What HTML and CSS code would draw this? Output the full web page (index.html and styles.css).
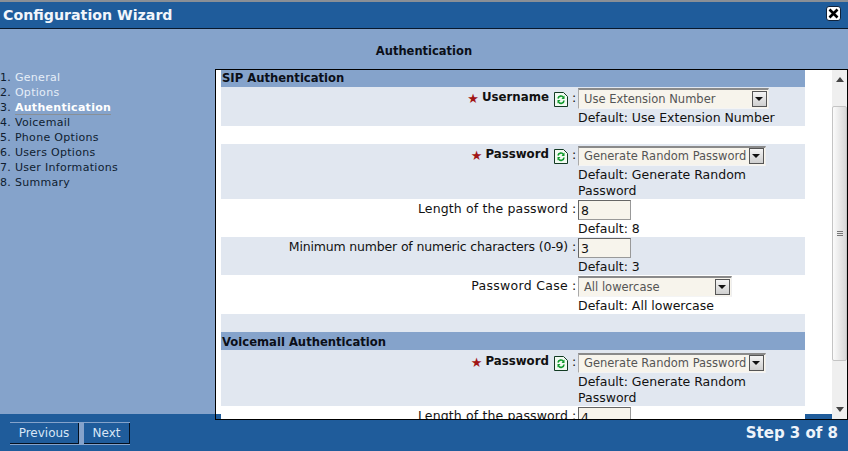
FILE: index.html
```html
<!DOCTYPE html>
<html lang="en">
<head>
<meta charset="utf-8">
<title>Configuration Wizard</title>
<link rel="stylesheet" href="styles.css">
</head>
<body>
<div class="wizard">
  <div class="topline"></div>
  <header class="titlebar">
    <h1>Configuration Wizard</h1>
    <button class="close" aria-label="Close"><svg width="13" height="13" viewBox="0 0 13 13"><path d="M2.500 2.500l8 8M10.500 2.500l-8 8" stroke="#000" stroke-width="2.600" fill="none"/></svg></button>
  </header>
  <main class="middle">
    <h2 class="heading">Authentication</h2>
    <div class="columns">
      <ol class="steps">
        <li class="done"><span>General</span></li>
        <li class="done"><span>Options</span></li>
        <li class="current"><span>Authentication</span></li>
        <li><span>Voicemail</span></li>
        <li><span>Phone Options</span></li>
        <li><span>Users Options</span></li>
        <li><span>User Informations</span></li>
        <li><span>Summary</span></li>
      </ol>
      <div class="panel">
        <div class="form">
          <div class="section first">SIP Authentication</div>

          <div class="row shade">
            <div class="label strong"><span class="star">★</span><b>Username</b><svg class="refresh" viewBox="0 0 14 15"><path d="M.5.5h9l4 4v10H.5z" fill="#f2faf2" stroke="#123a22"/><path d="M4 6.500a3 3 0 0 1 5.500-1M10 8.500a3 3 0 0 1-5.500 1.500" stroke="#0f9a2c" stroke-width="1.600" fill="none"/><path d="M10.500 3.500v3.500h-3zM3.500 11.500V8h3z" fill="#0f9a2c"/></svg><span class="colon">:</span></div>
            <div class="value">
              <div class="select wide"><span>Use Extension Number</span><i class="arrow"></i></div>
              <div class="hint">Default: Use Extension Number</div>
            </div>
          </div>
          <div class="gap"></div>
          <div class="row shade">
            <div class="label strong"><span class="star">★</span><b>Password</b><svg class="refresh" viewBox="0 0 14 15"><path d="M.5.5h9l4 4v10H.5z" fill="#f2faf2" stroke="#123a22"/><path d="M4 6.500a3 3 0 0 1 5.500-1M10 8.500a3 3 0 0 1-5.500 1.500" stroke="#0f9a2c" stroke-width="1.600" fill="none"/><path d="M10.500 3.500v3.500h-3zM3.500 11.500V8h3z" fill="#0f9a2c"/></svg><span class="colon">:</span></div>
            <div class="value">
              <div class="select"><span>Generate Random Password</span><i class="arrow"></i></div>
              <div class="hint">Default: Generate Random Password</div>
            </div>
          </div>
          <div class="row">
            <div class="label">Length of the password<span class="colon">:</span></div>
            <div class="value"><div class="input">8</div><div class="hint">Default: 8</div></div>
          </div>
          <div class="row shade">
            <div class="label tight">Minimum number of numeric characters (0-9)<span class="colon">:</span></div>
            <div class="value"><div class="input">3</div><div class="hint">Default: 3</div></div>
          </div>
          <div class="row">
            <div class="label low">Password Case<span class="colon">:</span></div>
            <div class="value">
              <div class="select mid"><span>All lowercase</span><i class="arrow"></i></div>
              <div class="hint">Default: All lowercase</div>
            </div>
          </div>
          <div class="gap shade"></div>
          <div class="section">Voicemail Authentication</div>
          <div class="row shade pushed">
            <div class="label strong"><span class="star">★</span><b>Password</b><svg class="refresh" viewBox="0 0 14 15"><path d="M.5.5h9l4 4v10H.5z" fill="#f2faf2" stroke="#123a22"/><path d="M4 6.500a3 3 0 0 1 5.500-1M10 8.500a3 3 0 0 1-5.500 1.500" stroke="#0f9a2c" stroke-width="1.600" fill="none"/><path d="M10.500 3.500v3.500h-3zM3.500 11.500V8h3z" fill="#0f9a2c"/></svg><span class="colon">:</span></div>
            <div class="value">
              <div class="select"><span>Generate Random Password</span><i class="arrow"></i></div>
              <div class="hint">Default: Generate Random Password</div>
            </div>
          </div>
          <div class="row">
            <div class="label">Length of the password<span class="colon">:</span></div>
            <div class="value"><div class="input">4</div></div>
          </div>
        </div>
        <div class="scrollbar">
          <svg class="sb-arrow" width="8" height="5" viewBox="0 0 8 5"><path d="M4 0l4 5H0z" fill="#444"/></svg>
          <div class="thumb"><svg width="8" height="8" viewBox="0 0 8 8"><path d="M1 1.500h6M1 3.500h6M1 5.500h6" stroke="#777"/></svg></div>
          <svg class="sb-arrow" width="8" height="5" viewBox="0 0 8 5"><path d="M4 5l4-5H0z" fill="#444"/></svg>
        </div>
      </div>
    </div>
  </main>
  <footer class="bottombar">
    <div class="buttons">
      <button class="btn">Previous</button>
      <button class="btn">Next</button>
    </div>
    <div class="stepcount">Step 3 of 8</div>
  </footer>
</div>
</body>
</html>
```
FILE: styles.css
```css
html, body { margin: 0; padding: 0; }
body { width: 848px; height: 451px; overflow: hidden; font-family: "DejaVu Sans", Verdana, sans-serif; font-size: 12.5px; color: #111; }
.wizard { display: flex; flex-direction: column; width: 848px; height: 451px; background: #85a3cb; }
.topline { height: 2px; background: #8a8f96; flex: none; }
.titlebar { height: 26px; background: #1f5c9b; border-bottom: 1px solid #08182c; display: flex; align-items: center; justify-content: space-between; padding: 0 7px 0 3px; flex: none; }
.titlebar h1 { margin: 0; font-size: 14.200px; line-height: 26px; font-weight: bold; color: #f2f6fb; }
.close { width: 15px; height: 15px; padding: 0; border: 1px solid #10233c; border-radius: 3px; background: #fff; display: flex; align-items: center; justify-content: center; margin-top: -4px; }
.close svg { display: block; }
.middle { flex: 1; min-height: 0; display: flex; flex-direction: column; }
.heading { margin: 0; height: 40px; line-height: 44px; font-size: 11.500px; font-weight: bold; text-align: center; color: #0b0f18; flex: none; }
.columns { flex: 1; min-height: 0; display: flex; }
.steps { list-style: none; margin: 0; padding: 1px 0 0; width: 215px; flex: none; counter-reset: s; }
.steps li { height: 15px; line-height: 15px; font-size: 11px; color: #0f1d30; counter-increment: s; letter-spacing: .3px; }
.steps li::before { content: counter(s) ". "; color: #0f1d30; font-weight: normal; }
.steps .done { color: #e6eef8; }
.steps .current { color: #fff; font-weight: bold; }
.steps .current span { box-shadow: 0 1px 0 rgba(140, 130, 110, .55); }
.panel { flex: none; width: 631px; height: 349px; border: 1px solid #000; display: flex; overflow: hidden; position: relative; z-index: 1; background: linear-gradient(#fff, #fff) no-repeat top left / 100% 344px; }
.form { width: 584px; margin-left: 5px; flex: none; height: 349px; overflow: hidden; background: #fff; }
.section { height: 18px; line-height: 20px; background: #85a3cb; font-weight: bold; font-size: 11.600px; color: #0b0f18; padding-left: 1px; }
.section.first { height: 17px; line-height: 17px; }
.row { display: grid; grid-template-columns: 357px 227px; }
.pushed { padding-top: 1px; }
.shade { background: #e1e7f0; }
.label { display: flex; justify-content: flex-end; align-items: flex-start; padding-top: 2px; line-height: 15px; white-space: nowrap; letter-spacing: .14px; }
.strong, .low { padding-top: 3px; }
.low { letter-spacing: .3px; }
.tight { letter-spacing: -.17px; }
.label b { font-weight: bold; font-size: 11.800px; letter-spacing: 0; }
.star { color: #a11515; font-size: 13px; line-height: 18px; margin-right: 3px; height: 15px; letter-spacing: 0; }
.refresh { width: 14px; height: 15px; margin-left: 5px; margin-top: 2px; flex: none; }
.colon { margin: 0 3px 0 4px; width: 3px; letter-spacing: 0; }
.value { line-height: 16px; }
.hint { width: 210px; margin-top: 1px; }
.select { width: 188px; height: 20px; box-sizing: border-box; display: flex; align-items: center; justify-content: space-between; background: #f7f4ec; border-top: 2px solid #8a8a8a; border-left: 1px solid #aaa; border-right: 1px solid #eee; border-bottom: 1px solid #f4f4f4; padding: 0 1px 1px 5px; font-size: 11.500px; color: #555; white-space: nowrap; margin-top: 2px; }
.wide { width: 191px; height: 21px; margin-top: 1px; padding-bottom: 0; }
.mid { width: 154px; height: 21px; margin-top: 1px; padding-bottom: 0; }
.arrow { width: 15px; height: 16px; box-sizing: border-box; border: 1px solid #555; background: linear-gradient(#f4f4f4, #cfcfcf); position: relative; flex: none; }
.arrow::after { content: ""; position: absolute; left: 2px; top: 5px; border-top: 4px solid #111; border-left: 4px solid transparent; border-right: 4px solid transparent; }
.input { width: 53px; height: 20px; box-sizing: border-box; background: #f7f4ec; border: 1px solid #777; border-color: #666 #999 #999 #666; line-height: 19px; padding-left: 2px; margin-top: 1px; }
.gap { height: 18px; }
.scrollbar { width: 15px; margin-left: 27px; flex: none; background: #efefef; display: flex; flex-direction: column; align-items: center; justify-content: space-between; padding: 7px 0; box-sizing: border-box; position: relative; }
.thumb { position: absolute; top: 36px; left: 0; width: 15px; height: 255px; box-sizing: border-box; background: linear-gradient(90deg,#fbfbfb,#d8d8d8); border: 1px solid #c4c4c4; border-radius: 2px; display: flex; align-items: center; justify-content: center; }
.bottombar { height: 37px; flex: none; background: #1f5c9b; display: flex; justify-content: space-between; align-items: center; padding: 0 10px; }
.buttons { display: flex; gap: 5px; padding: 1px 0; background: #85a3cb; margin-top: 1px; }
.btn { height: 21px; width: 69px; padding: 0; font: 12px "DejaVu Sans", Verdana, sans-serif; color: #d8e6f6; background: #1f5c9b; border: 0; border-right: 1px solid #04101f; border-bottom: 1px solid #04101f; }
.btn + .btn { width: 46px; }
.stepcount { font-size: 15px; font-weight: bold; color: #eef3fa; }
```
